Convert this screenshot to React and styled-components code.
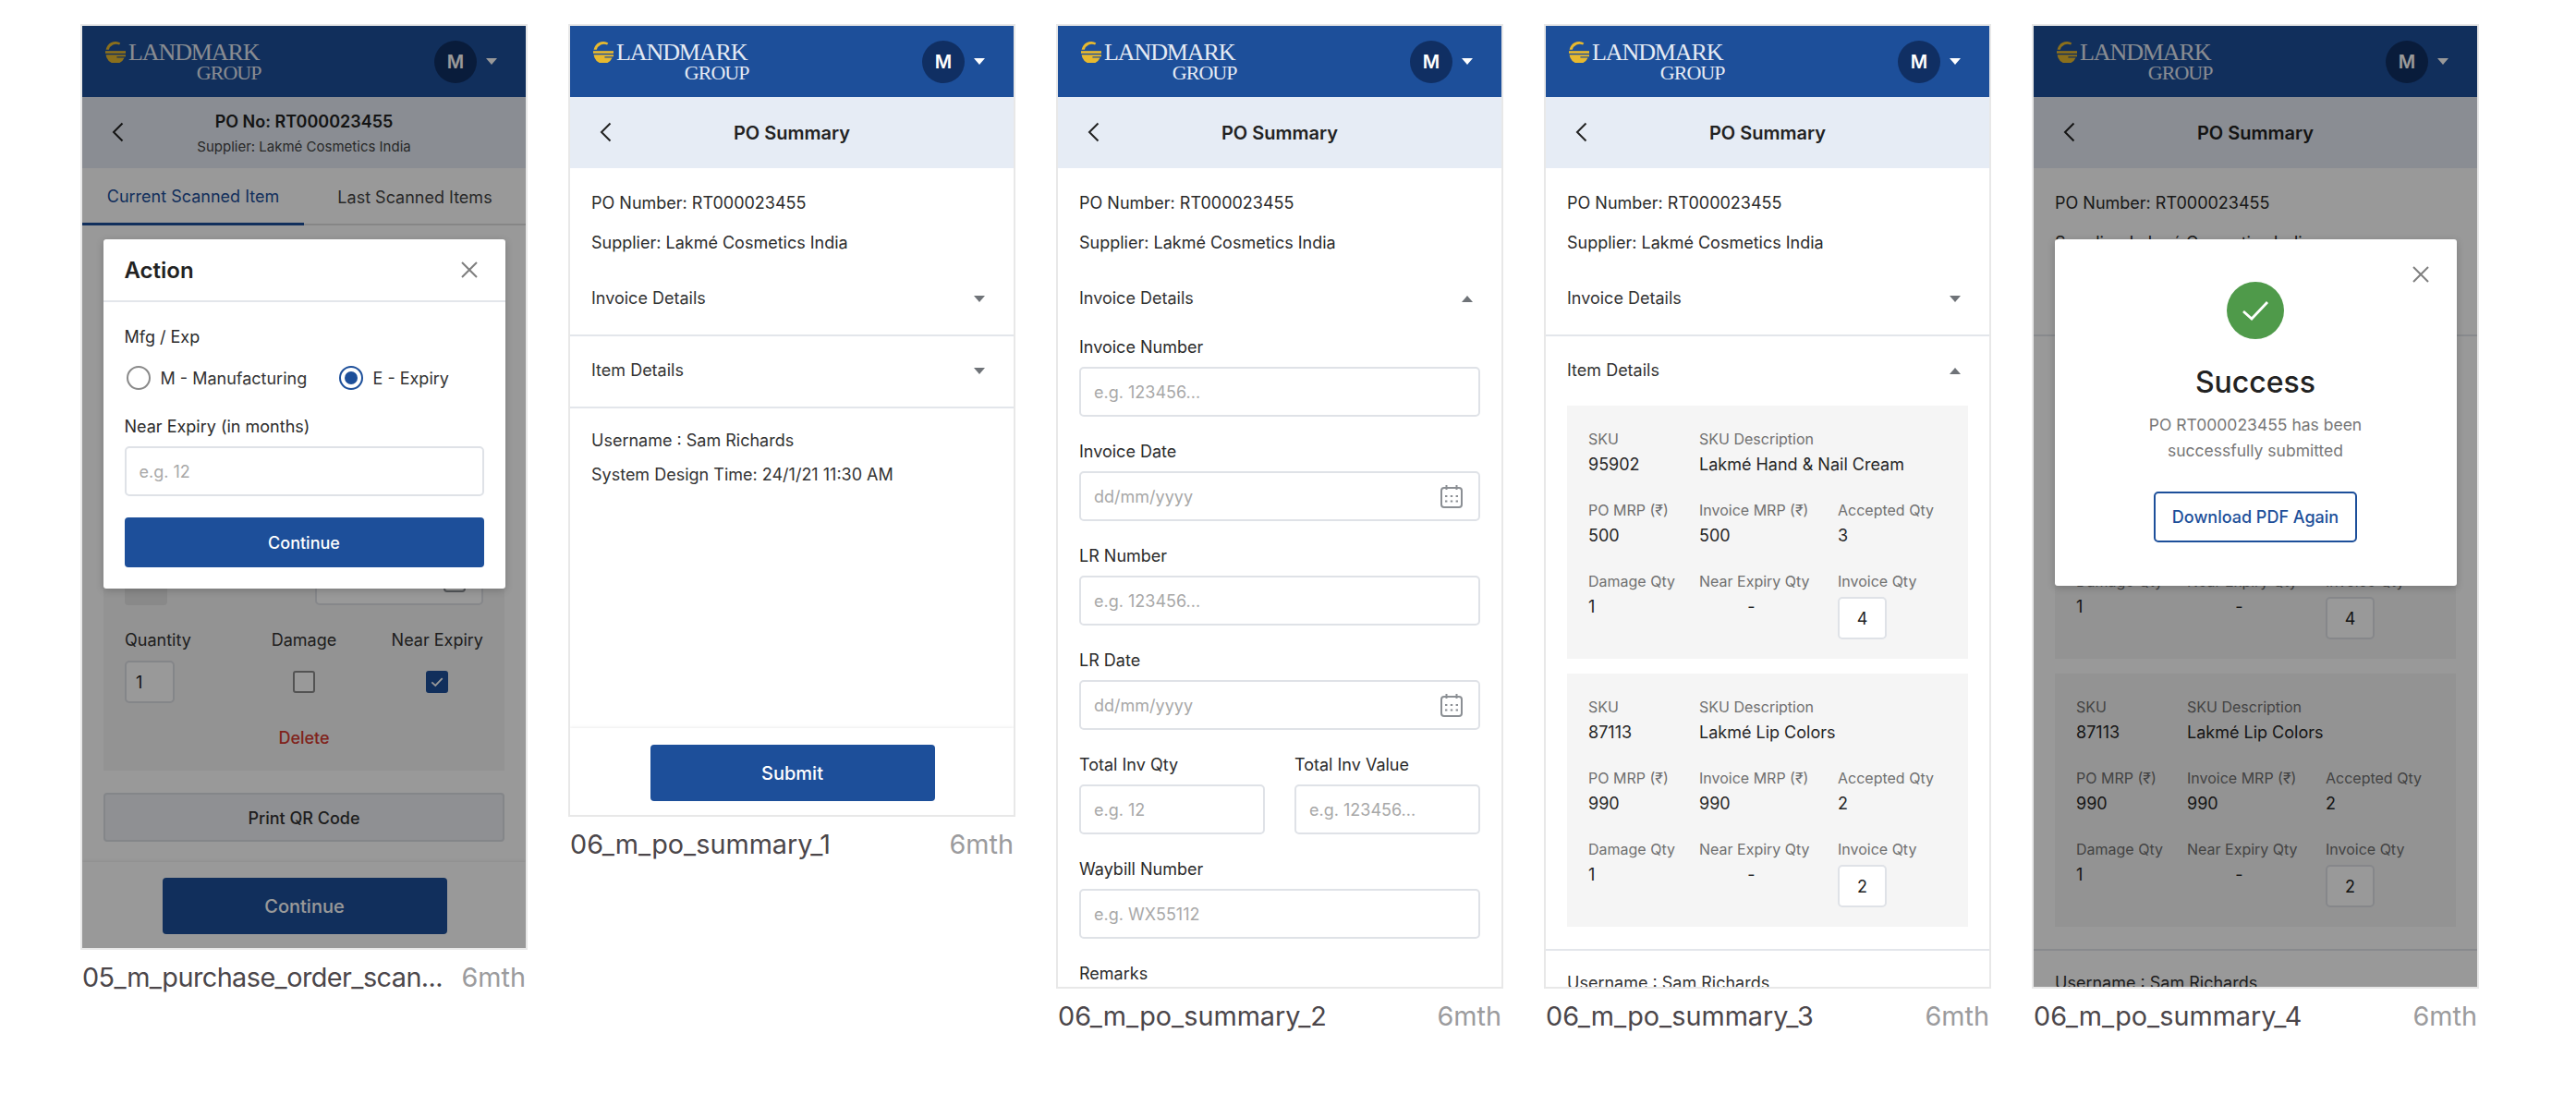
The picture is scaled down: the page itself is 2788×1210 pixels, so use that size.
import React from 'react';
import styled, { createGlobalStyle } from 'styled-components';

const GlobalStyle = createGlobalStyle`
  html, body { margin: 0; padding: 0; background: #fff; overflow: hidden; }
  * { box-sizing: border-box; }
  body { font-family: Inter, "Noto Sans", sans-serif; color: #222; }
`;

const Page = styled.div`
  display: flex;
  align-items: flex-start;
  gap: 44px;
  width: 2788px;
  height: 1210px;
  padding: 26px 0 0 87px;
`;
const Thumb = styled.div`
  width: 484px;
  flex: none;
`;
const Frame = styled.div`
  position: relative;
  display: flex;
  flex-direction: column;
  height: ${(p) => p.$height + 4}px;
  border: 2px solid #e8e8e8;
  overflow: hidden;
  background: #fff;
`;
const Caption = styled.div`
  display: flex;
  justify-content: space-between;
  align-items: center;
  margin-top: 12px;
  padding: 0 2px;
  font-size: 28.8px;
  line-height: 36px;
  white-space: nowrap;
  color: #4b464a;
`;
const CaptionName = styled.span`
  letter-spacing: ${(p) => (p.$tight ? '-0.55px' : '0')};
`;
const CaptionAge = styled.span`
  color: #9b9b9d;
`;

const TopBar = styled.div`
  flex: none;
  display: flex;
  align-items: center;
  justify-content: space-between;
  height: 77px;
  padding: 0 31px 0 25px;
  background: #1d4f9a;
`;
const Logo = styled.div`
  display: flex;
  align-items: flex-start;
  gap: 3px;
`;
const LogoWords = styled.div`
  display: flex;
  flex-direction: column;
  align-items: flex-end;
  font-family: "Liberation Serif", serif;
  color: #e4eaf4;
`;
const LogoMain = styled.span`
  font-size: 26px;
  line-height: 24px;
  letter-spacing: -1.1px;
`;
const LogoSub = styled.span`
  font-size: 22px;
  line-height: 20px;
  letter-spacing: -1px;
  margin-right: -2px;
`;
const UserMenu = styled.div`
  display: flex;
  align-items: center;
  gap: 10px;
`;
const Avatar = styled.div`
  display: flex;
  align-items: center;
  justify-content: center;
  width: 46px;
  height: 46px;
  border-radius: 50%;
  background: #102f63;
  color: #fff;
  font-size: 20px;
  font-weight: 600;
`;
const Caret = styled.span`
  width: 0;
  height: 0;
  border-left: 6px solid transparent;
  border-right: 6px solid transparent;
  border-top: ${(p) => (p.$up ? '0' : `7px solid ${p.$color || '#6f7378'}`)};
  border-bottom: ${(p) => (p.$up ? `7px solid ${p.$color || '#6f7378'}` : '0')};
`;

const SubBar = styled.div`
  flex: none;
  position: relative;
  display: flex;
  flex-direction: column;
  align-items: center;
  justify-content: center;
  height: 77px;
  background: #e6ecf5;
`;
const BackIcon = styled.svg`
  position: absolute;
  left: 32px;
  top: 27px;
`;
const SubTitle = styled.div`
  font-size: ${(p) => (p.$small ? 18 : 20)}px;
  font-weight: 600;
  line-height: 26px;
  color: #222;
`;
const SubNote = styled.div`
  margin-top: 4px;
  font-size: 15px;
  line-height: 20px;
  color: #444;
`;

const Tabs = styled.div`
  flex: none;
  display: flex;
  height: 62px;
  border-bottom: 2px solid #e0e0e0;
`;
const Tab = styled.div`
  flex: 1;
  display: flex;
  align-items: center;
  justify-content: center;
  margin-bottom: -2px;
  padding-top: 2px;
  font-size: 18px;
  color: ${(p) => (p.$active ? '#1d4f9a' : '#444')};
  border-bottom: ${(p) => (p.$active ? '3px solid #1d4f9a' : '2px solid transparent')};
`;

const ScanBody = styled.div`
  flex: 1;
  padding: 15px 23px 0;
`;
const ScanPanel = styled.div`
  display: flex;
  flex-direction: column;
  justify-content: flex-end;
  height: 575px;
  padding: 0 23px 24px;
  background: #f5f5f5;
`;
const DateRow = styled.div`
  display: flex;
  justify-content: space-between;
  margin-bottom: 27px;
`;
const UnitBox = styled.div`
  display: flex;
  align-items: center;
  gap: 16px;
`;
const UnitChip = styled.span`
  display: flex;
  align-items: center;
  justify-content: center;
  width: 46px;
  height: 54px;
  border-radius: 4px;
  background: #e4e4e4;
  font-size: 18px;
`;
const UnitLink = styled.span`
  color: #1d4f9a;
  font-size: 18px;
  text-decoration: underline;
`;
const QtyGrid = styled.div`
  display: grid;
  grid-template-columns: 1fr auto 1fr;
`;
const QtyColumn = styled.div`
  display: flex;
  flex-direction: column;
  align-items: flex-start;
  justify-self: ${(p) => (p.$end ? 'end' : 'auto')};
`;
const QtyLabel = styled.div`
  font-size: 18px;
  line-height: 22px;
  margin-bottom: 11px;
  color: #333;
`;
const QtyCheckCell = styled.div`
  display: flex;
  align-items: center;
  justify-content: center;
  height: 46px;
  align-self: center;
`;
const QtyBox = styled.div`
  display: flex;
  align-items: center;
  width: 54px;
  height: 46px;
  padding-left: 10px;
  border: 2px solid #dcdfe4;
  border-radius: 5px;
  background: #fff;
  font-size: 18px;
`;
const CheckBox = styled.span`
  display: flex;
  align-items: center;
  justify-content: center;
  width: 24px;
  height: 24px;
  border: 2px solid ${(p) => (p.$checked ? '#1d4f9a' : '#8a8a8a')};
  border-radius: 3px;
  background: ${(p) => (p.$checked ? '#1d4f9a' : '#fff')};
`;
const DeleteLink = styled.div`
  margin-top: 27px;
  text-align: center;
  font-size: 18px;
  font-weight: 500;
  line-height: 22px;
  color: #d63a30;
`;
const OutlineWide = styled.div`
  display: flex;
  align-items: center;
  justify-content: center;
  height: 53px;
  margin-top: 24px;
  padding-top: 2px;
  border: 2px solid #dcdfe4;
  border-radius: 4px;
  background: #eef1f6;
  font-size: 18px;
  font-weight: 500;
  color: #333;
`;

const Footer = styled.div`
  flex: none;
  display: flex;
  justify-content: center;
  height: ${(p) => p.$height}px;
  padding: ${(p) => p.$height - 76}px 0 0 1px;
  background: #fff;
  box-shadow: 0 -1px 3px rgba(0, 0, 0, 0.08);
`;
const PrimaryButton = styled.div`
  display: flex;
  align-items: center;
  justify-content: center;
  width: ${(p) => (p.$full ? '100%' : '308px')};
  height: ${(p) => (p.$full ? 54 : 61)}px;
  padding-top: 1px;
  border-radius: 4px;
  background: #1d4f9a;
  color: #fff;
  font-size: ${(p) => (p.$full ? 18 : 20)}px;
  font-weight: 500;
`;

const Summary = styled.div`
  flex: 1;
  min-height: 0;
  overflow: hidden;
  padding-top: 27px;
`;
const InfoLine = styled.div`
  padding: 0 23px;
  margin-bottom: 21px;
  font-size: 18px;
  line-height: 22px;
  color: #2b2b2b;
  &:nth-child(2) { margin-bottom: 12px; }
`;
const Section = styled.div`
  padding: 26px 23px ${(p) => (p.$open ? 24 : 28)}px;
  border-bottom: 2px solid #e3e6eb;
`;
const SectionHead = styled.div`
  display: flex;
  align-items: center;
  justify-content: space-between;
  padding-right: 8px;
  font-size: 18px;
  line-height: 22px;
  color: #333;
`;
const Meta = styled.div`
  padding: 24px 23px 0;
`;
const MetaLine = styled.div`
  margin-bottom: 15px;
  font-size: 18px;
  line-height: 22px;
  color: #333;
`;

const Fields = styled.div`
  display: flex;
  flex-direction: column;
  gap: 27px;
  margin-top: 31px;
`;
const Field = styled.div`
  display: flex;
  flex-direction: column;
  gap: 10px;
  min-width: 0;
`;
const FieldRow = styled.div`
  display: grid;
  grid-template-columns: 201px 201px;
  justify-content: space-between;
`;
const FieldLabel = styled.label`
  font-size: 18px;
  line-height: 22px;
  color: #2b2b2b;
`;
const InputBox = styled.div`
  display: flex;
  align-items: center;
  justify-content: space-between;
  width: ${(p) => p.$width || 'auto'};
  height: 54px;
  padding: 0 17px 0 14px;
  border: 2px solid #dfe2e7;
  border-radius: 5px;
  background: #fff;
  font-size: 18px;
  color: #a8a8a8;
`;

const ItemList = styled.div`
  display: flex;
  flex-direction: column;
  gap: 16px;
  margin-top: 27px;
`;
const ItemCard = styled.div`
  display: grid;
  grid-template-columns: 120px 150px 1fr;
  align-content: start;
  row-gap: 28px;
  height: 274px;
  padding: 26px 23px 0;
  background: #f5f5f5;
`;
const ItemCell = styled.div`
  grid-column: ${(p) => (p.$wide ? 'span 2' : 'auto')};
  display: flex;
  flex-direction: column;
  align-items: flex-start;
  gap: 7px;
`;
const ItemLabel = styled.div`
  font-size: 16px;
  line-height: 20px;
  white-space: nowrap;
  color: #707070;
`;
const ItemValue = styled.div`
  width: ${(p) => (p.$center ? '113px' : 'auto')};
  text-align: ${(p) => (p.$center ? 'center' : 'left')};
  font-size: 18px;
  line-height: 22px;
  color: #262626;
`;
const QtyInput = styled.div`
  display: flex;
  align-items: center;
  justify-content: center;
  width: 53px;
  height: 46px;
  border: 2px solid #dfe2e7;
  border-radius: 5px;
  background: #fff;
  font-size: 18px;
  color: #222;
`;

const Overlay = styled.div`
  position: absolute;
  inset: 0;
  display: flex;
  justify-content: center;
  align-items: flex-start;
  padding-top: 231px;
  background: rgba(0, 0, 0, 0.4);
`;
const Modal = styled.div`
  position: relative;
  width: 435px;
  border-radius: 3px;
  background: #fff;
  box-shadow: 0 2px 8px rgba(0, 0, 0, 0.2);
`;
const ModalHead = styled.div`
  display: flex;
  align-items: center;
  justify-content: space-between;
  height: 68px;
  padding: 0 30px 0 23px;
  border-bottom: 2px solid #e3e6eb;
  font-size: 24px;
  font-weight: 600;
  color: #222;
`;
const ModalBody = styled.div`
  display: flex;
  flex-direction: column;
  padding: 27px 23px 23px;
`;
const RadioRow = styled.div`
  display: grid;
  grid-template-columns: 230px auto;
  margin: 20px 0 29px;
  padding-left: 2px;
`;
const RadioOption = styled.div`
  display: flex;
  align-items: center;
  gap: 11px;
  font-size: 18px;
  color: #333;
`;
const RadioDot = styled.span`
  display: flex;
  align-items: center;
  justify-content: center;
  width: 26px;
  height: 26px;
  border-radius: 50%;
  border: 2px solid ${(p) => (p.$on ? '#1d4f9a' : '#8a8a8a')};
  &::after {
    content: "";
    width: 14px;
    height: 14px;
    border-radius: 50%;
    background: ${(p) => (p.$on ? '#1d4f9a' : 'transparent')};
  }
`;
const ModalInput = styled(InputBox)`
  margin: 10px 0 23px;
`;
const CloseSpot = styled.div`
  position: absolute;
  top: 29px;
  right: 30px;
  display: flex;
`;
const SuccessBody = styled.div`
  display: flex;
  flex-direction: column;
  align-items: center;
  padding: 46px 0 47px;
`;
const SuccessIcon = styled.div`
  display: flex;
  align-items: center;
  justify-content: center;
  width: 62px;
  height: 62px;
  border-radius: 50%;
  background: #4f9a4a;
`;
const SuccessTitle = styled.div`
  margin-top: 27px;
  font-size: 32px;
  font-weight: 500;
  line-height: 40px;
  color: #222;
`;
const SuccessText = styled.div`
  margin-top: 12px;
  text-align: center;
  font-size: 17.5px;
  line-height: 28px;
  color: #777;
`;
const OutlineButton = styled.div`
  display: flex;
  align-items: center;
  justify-content: center;
  width: 220px;
  height: 55px;
  margin-top: 30px;
  border: 2px solid #1d4f9a;
  border-radius: 5px;
  color: #1d4f9a;
  font-size: 18px;
  font-weight: 500;
`;

function LogoMark() {
  return (
    <svg width="22" height="23" viewBox="0 0 23 24">
      <path d="M0.6 9.2 A11 11 0 0 1 17 1.5 L15.8 3.6 A8.5 8.5 0 0 0 4 9.2 Z" fill="#e7b92f" />
      <path d="M0 10.6 H23 V13.4 H0 Z" fill="#e7b92f" />
      <path d="M0.6 15 H23 V17 H13 V18.4 H21.6 A11 11 0 0 1 1.4 18 Z" fill="#e7b92f" />
    </svg>
  );
}

function Brand() {
  return (
    <TopBar>
      <Logo>
        <LogoMark />
        <LogoWords>
          <LogoMain>LANDMARK</LogoMain>
          <LogoSub>GROUP</LogoSub>
        </LogoWords>
      </Logo>
      <UserMenu>
        <Avatar>M</Avatar>
        <Caret $color="#fff" />
      </UserMenu>
    </TopBar>
  );
}

function Back() {
  return (
    <BackIcon width="13" height="22" viewBox="0 0 13 22" fill="none">
      <path d="M11.5 1.5 2 11l9.5 9.5" stroke="#222" strokeWidth="2" />
    </BackIcon>
  );
}

function CloseIcon() {
  return (
    <svg width="18" height="18" viewBox="0 0 18 18" fill="none">
      <path d="M1 1l16 16M17 1 1 17" stroke="#7f7f7f" strokeWidth="2" />
    </svg>
  );
}

function CalendarIcon() {
  return (
    <svg width="24" height="26" viewBox="0 0 24 26" fill="none" stroke="#8b8f94">
      <rect x="1" y="4" width="22" height="21" rx="3" strokeWidth="2" />
      <path d="M6.5 1v5M17.5 1v5" strokeWidth="2" />
      <path d="M5 13h2.4M10.8 13h2.4M16.6 13h2.4M5 18.5h2.4M10.8 18.5h2.4M16.6 18.5h2.4" strokeWidth="2" />
    </svg>
  );
}

function TickIcon({ size = 16, weight = 2 }) {
  return (
    <svg width={size} height={size} viewBox="0 0 16 16" fill="none">
      <path d="M1.5 8.5 6 12.5l8.5-9" stroke="#fff" strokeWidth={weight} />
    </svg>
  );
}

function Row({ title, open }) {
  return (
    <SectionHead>
      {title}
      <Caret $up={open} />
    </SectionHead>
  );
}

function PoInfo() {
  return (
    <>
      <InfoLine>PO Number: RT000023455</InfoLine>
      <InfoLine>Supplier: Lakmé Cosmetics India</InfoLine>
    </>
  );
}

function SummaryTop() {
  return (
    <>
      <Brand />
      <SubBar>
        <Back />
        <SubTitle>PO Summary</SubTitle>
      </SubBar>
    </>
  );
}

const items = [
  { sku: '95902', name: 'Lakmé Hand & Nail Cream', mrp: '500', accepted: '3', damage: '1', qty: '4' },
  { sku: '87113', name: 'Lakmé Lip Colors', mrp: '990', accepted: '2', damage: '1', qty: '2' },
];

function ItemBlock({ item }) {
  return (
    <ItemCard>
      <ItemCell>
        <ItemLabel>SKU</ItemLabel>
        <ItemValue>{item.sku}</ItemValue>
      </ItemCell>
      <ItemCell $wide>
        <ItemLabel>SKU Description</ItemLabel>
        <ItemValue>{item.name}</ItemValue>
      </ItemCell>
      <ItemCell>
        <ItemLabel>PO MRP (₹)</ItemLabel>
        <ItemValue>{item.mrp}</ItemValue>
      </ItemCell>
      <ItemCell>
        <ItemLabel>Invoice MRP (₹)</ItemLabel>
        <ItemValue>{item.mrp}</ItemValue>
      </ItemCell>
      <ItemCell>
        <ItemLabel>Accepted Qty</ItemLabel>
        <ItemValue>{item.accepted}</ItemValue>
      </ItemCell>
      <ItemCell>
        <ItemLabel>Damage Qty</ItemLabel>
        <ItemValue>{item.damage}</ItemValue>
      </ItemCell>
      <ItemCell>
        <ItemLabel>Near Expiry Qty</ItemLabel>
        <ItemValue $center>-</ItemValue>
      </ItemCell>
      <ItemCell>
        <ItemLabel>Invoice Qty</ItemLabel>
        <QtyInput>{item.qty}</QtyInput>
      </ItemCell>
    </ItemCard>
  );
}

function ItemSummary() {
  return (
    <>
      <SummaryTop />
      <Summary>
        <PoInfo />
        <Section>
          <Row title="Invoice Details" />
        </Section>
        <Section $open>
          <Row title="Item Details" open />
          <ItemList>
            {items.map((item) => (
              <ItemBlock key={item.sku} item={item} />
            ))}
          </ItemList>
        </Section>
        <Meta>
          <MetaLine>Username : Sam Richards</MetaLine>
        </Meta>
      </Summary>
    </>
  );
}

function ScanScreen() {
  return (
    <>
      <Brand />
      <SubBar>
        <Back />
        <SubTitle $small>PO No: RT000023455</SubTitle>
        <SubNote>Supplier: Lakmé Cosmetics India</SubNote>
      </SubBar>
      <Tabs>
        <Tab $active>Current Scanned Item</Tab>
        <Tab>Last Scanned Items</Tab>
      </Tabs>
      <ScanBody>
        <ScanPanel>
          <DateRow>
            <UnitBox>
              <UnitChip>M</UnitChip>
              <UnitLink>E</UnitLink>
            </UnitBox>
            <InputBox $width="182px">
              <span>11/21</span>
              <CalendarIcon />
            </InputBox>
          </DateRow>
          <QtyGrid>
            <QtyColumn>
              <QtyLabel>Quantity</QtyLabel>
              <QtyBox>1</QtyBox>
            </QtyColumn>
            <QtyColumn>
              <QtyLabel>Damage</QtyLabel>
              <QtyCheckCell>
                <CheckBox />
              </QtyCheckCell>
            </QtyColumn>
            <QtyColumn $end>
              <QtyLabel>Near Expiry</QtyLabel>
              <QtyCheckCell>
                <CheckBox $checked>
                  <TickIcon size={14} />
                </CheckBox>
              </QtyCheckCell>
            </QtyColumn>
          </QtyGrid>
          <DeleteLink>Delete</DeleteLink>
        </ScanPanel>
        <OutlineWide>Print QR Code</OutlineWide>
      </ScanBody>
      <Footer $height={93}>
        <PrimaryButton>Continue</PrimaryButton>
      </Footer>
      <Overlay>
        <Modal>
          <ModalHead>
            Action
            <CloseIcon />
          </ModalHead>
          <ModalBody>
            <FieldLabel>Mfg / Exp</FieldLabel>
            <RadioRow>
              <RadioOption>
                <RadioDot />
                M - Manufacturing
              </RadioOption>
              <RadioOption>
                <RadioDot $on />
                E - Expiry
              </RadioOption>
            </RadioRow>
            <FieldLabel>Near Expiry (in months)</FieldLabel>
            <ModalInput>e.g. 12</ModalInput>
            <PrimaryButton $full>Continue</PrimaryButton>
          </ModalBody>
        </Modal>
      </Overlay>
    </>
  );
}

function CollapsedSummary() {
  return (
    <>
      <SummaryTop />
      <Summary>
        <PoInfo />
        <Section>
          <Row title="Invoice Details" />
        </Section>
        <Section>
          <Row title="Item Details" />
        </Section>
        <Meta>
          <MetaLine>Username : Sam Richards</MetaLine>
          <MetaLine>System Design Time: 24/1/21 11:30 AM</MetaLine>
        </Meta>
      </Summary>
      <Footer $height={94}>
        <PrimaryButton>Submit</PrimaryButton>
      </Footer>
    </>
  );
}

function InputField({ label, hint, date }) {
  return (
    <Field>
      <FieldLabel>{label}</FieldLabel>
      <InputBox>
        {hint}
        {date && <CalendarIcon />}
      </InputBox>
    </Field>
  );
}

function InvoiceSummary() {
  return (
    <>
      <SummaryTop />
      <Summary>
        <PoInfo />
        <Section>
          <Row title="Invoice Details" open />
          <Fields>
            <InputField label="Invoice Number" hint="e.g. 123456..." />
            <InputField label="Invoice Date" hint="dd/mm/yyyy" date />
            <InputField label="LR Number" hint="e.g. 123456..." />
            <InputField label="LR Date" hint="dd/mm/yyyy" date />
            <FieldRow>
              <InputField label="Total Inv Qty" hint="e.g. 12" />
              <InputField label="Total Inv Value" hint="e.g. 123456..." />
            </FieldRow>
            <InputField label="Waybill Number" hint="e.g. WX55112" />
            <Field>
              <FieldLabel>Remarks</FieldLabel>
            </Field>
          </Fields>
        </Section>
      </Summary>
    </>
  );
}

function SuccessScreen() {
  return (
    <>
      <ItemSummary />
      <Overlay>
        <Modal>
          <CloseSpot>
            <CloseIcon />
          </CloseSpot>
          <SuccessBody>
            <SuccessIcon>
              <TickIcon size={32} weight={1.4} />
            </SuccessIcon>
            <SuccessTitle>Success</SuccessTitle>
            <SuccessText>
              PO RT000023455 has been
              <br />
              successfully submitted
            </SuccessText>
            <OutlineButton>Download PDF Again</OutlineButton>
          </SuccessBody>
        </Modal>
      </Overlay>
    </>
  );
}

function Screen({ name, height, tight, children }) {
  return (
    <Thumb>
      <Frame $height={height}>{children}</Frame>
      <Caption>
        <CaptionName $tight={tight}>{name}</CaptionName>
        <CaptionAge>6mth</CaptionAge>
      </Caption>
    </Thumb>
  );
}

export default function App() {
  return (
    <Page>
      <GlobalStyle />
      <Screen name="05_m_purchase_order_scan..." height={998} tight>
        <ScanScreen />
      </Screen>
      <Screen name="06_m_po_summary_1" height={854}>
        <CollapsedSummary />
      </Screen>
      <Screen name="06_m_po_summary_2" height={1040}>
        <InvoiceSummary />
      </Screen>
      <Screen name="06_m_po_summary_3" height={1040}>
        <ItemSummary />
      </Screen>
      <Screen name="06_m_po_summary_4" height={1040}>
        <SuccessScreen />
      </Screen>
    </Page>
  );
}
